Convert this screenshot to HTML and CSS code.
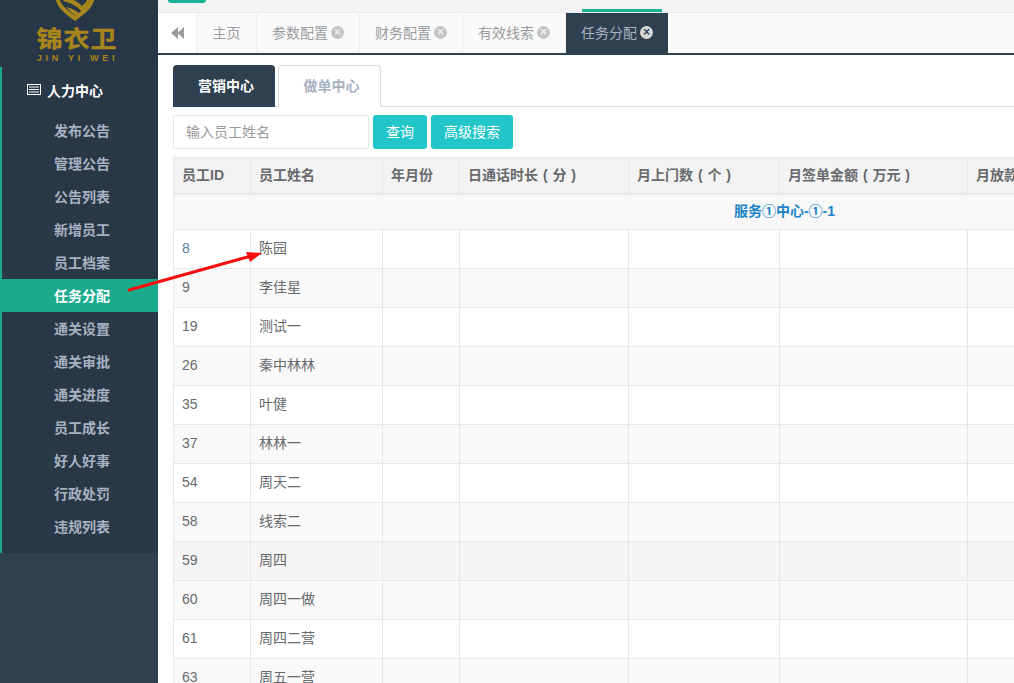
FILE: index.html
```html
<!DOCTYPE html>
<html lang="zh">
<head>
<meta charset="utf-8">
<title>任务分配</title>
<link rel="stylesheet" href="styles.css">
</head>
<body>
<div class="app">
  <aside class="sidebar">
    <div class="logo">
      <svg class="shield" width="44" height="21" viewBox="0 0 44 21"><path d="M2 -4 C3 8 13 14 22 21 C31 14 41 8 42 -4 L38 -4 C37 6 29 10 22 16 C15 10 7 6 6 -4 Z" fill="#a8861c"/><path d="M13 -3 C20 -1 25 2 29 6 L33 2 L35 -3 L38 -3 C37 3 33 8 28 11 C24 6 18 3 10 1 Z M13 7 C18 8 22 10 26 13 L22 16 C19 13 16 10 13 7 Z" fill="#a8861c"/></svg>
      <div class="logo-cn">锦衣卫</div>
      <div class="logo-en">JIN YI WEI</div>
    </div>
    <nav class="menu">
      <div class="menu-head">
        <svg class="menu-icon" width="14" height="11" viewBox="0 0 14 11"><rect x=".5" y=".5" width="13" height="10" fill="#293846" stroke="#fff"/><path d="M2 3h10M2 5.500h10M2 8h10" stroke="#fff"/></svg>
        <span>人力中心</span>
      </div>
      <a class="item">发布公告</a>
      <a class="item">管理公告</a>
      <a class="item">公告列表</a>
      <a class="item">新增员工</a>
      <a class="item">员工档案</a>
      <a class="item active">任务分配</a>
      <a class="item">通关设置</a>
      <a class="item">通关审批</a>
      <a class="item">通关进度</a>
      <a class="item">员工成长</a>
      <a class="item">好人好事</a>
      <a class="item">行政处罚</a>
      <a class="item">违规列表</a>
    </nav>
  </aside>
  <main class="main">
    <div class="topbar">
      <span class="top-btn"></span>
      <span class="top-line"></span>
    </div>
    <div class="tabbar">
      <div class="tab back"><svg width="14" height="12" viewBox="0 0 14 12"><path d="M7 0V12L0 6ZM13 0V12L6.500 6Z" fill="#999c9e"/></svg></div>
      <div class="tab home">主页</div>
      <div class="tab">参数配置<span class="close">×</span></div>
      <div class="tab">财务配置<span class="close">×</span></div>
      <div class="tab">有效线索<span class="close">×</span></div>
      <div class="tab current">任务分配<span class="close">×</span></div>
    </div>
    <div class="content">
      <div class="subtabs">
        <div class="subtab on">营销中心</div>
        <div class="subtab">做单中心</div>
      </div>
      <div class="search">
        <input class="field" placeholder="输入员工姓名">
        <button class="btn">查询</button>
        <button class="btn">高级搜索</button>
      </div>
      <table class="grid">
        <colgroup>
          <col class="c1"><col class="c2"><col class="c3"><col class="c4"><col class="c5"><col class="c6"><col class="c7"><col class="c8">
        </colgroup>
        <thead>
          <tr><th>员工ID</th><th>员工姓名</th><th>年月份</th><th>日通话时长 ( 分 )</th><th>月上门数 ( 个 )</th><th>月签单金额 ( 万元 )</th><th>月放款金额 ( 万元 )</th><th>备注</th></tr>
        </thead>
        <tbody>
          <tr class="group"><td colspan="8">服务①中心-①-1</td></tr>
          <tr><td class="link">8</td><td>陈园</td><td></td><td></td><td></td><td></td><td></td><td></td></tr>
          <tr class="alt"><td>9</td><td>李佳星</td><td></td><td></td><td></td><td></td><td></td><td></td></tr>
          <tr><td>19</td><td>测试一</td><td></td><td></td><td></td><td></td><td></td><td></td></tr>
          <tr class="alt"><td>26</td><td>秦中林林</td><td></td><td></td><td></td><td></td><td></td><td></td></tr>
          <tr><td>35</td><td>叶健</td><td></td><td></td><td></td><td></td><td></td><td></td></tr>
          <tr class="alt"><td>37</td><td>林林一</td><td></td><td></td><td></td><td></td><td></td><td></td></tr>
          <tr><td>54</td><td>周天二</td><td></td><td></td><td></td><td></td><td></td><td></td></tr>
          <tr class="alt"><td>58</td><td>线索二</td><td></td><td></td><td></td><td></td><td></td><td></td></tr>
          <tr class="hover"><td>59</td><td>周四</td><td></td><td></td><td></td><td></td><td></td><td></td></tr>
          <tr class="alt"><td>60</td><td>周四一做</td><td></td><td></td><td></td><td></td><td></td><td></td></tr>
          <tr><td>61</td><td>周四二营</td><td></td><td></td><td></td><td></td><td></td><td></td></tr>
          <tr class="alt"><td>63</td><td>周五一营</td><td></td><td></td><td></td><td></td><td></td><td></td></tr>
        </tbody>
      </table>
    </div>
  </main>
  <svg class="arrow" width="140" height="46" viewBox="0 0 140 46"><path d="M2 44 L124 10" stroke="#f70d0d" stroke-width="3" stroke-linecap="round"/><path d="M135 7 L119 6 L123 16 Z" fill="#f70d0d"/></svg>
</div>
</body>
</html>
```
FILE: styles.css
```css
* { box-sizing: border-box; }
html, body { margin: 0; height: 100%; overflow: hidden; }
body {
  font-family: "Liberation Sans", "Noto Sans CJK SC", sans-serif;
  font-size: 14px;
  color: #676a6c;
  background: #fff;
}
.app { position: relative; display: flex; width: 1014px; height: 683px; overflow: hidden; }

.sidebar { flex: 0 0 158px; background: #2f4050; display: flex; flex-direction: column; }
.logo {
  height: 67px;
  background: #283748;
  display: flex;
  flex-direction: column;
  align-items: center;
  color: #a8861c;
}
.shield { display: block; flex: none; margin-right: 8px; }
.logo-cn { font-size: 26px; line-height: 30px; height: 30px; font-weight: 700; letter-spacing: 1px; margin-top: 3px; margin-left: -4px; transform: scaleY(.88); -webkit-text-stroke: .4px #a8861c; }
.logo-en { font-size: 9px; line-height: 10px; font-weight: 700; letter-spacing: 3.7px; margin-left: -3px; margin-top: -1px; }

.menu { background: #293846; border-left: 2px solid #19aa8d; height: 486px; display: flex; flex-direction: column; }
.menu-head {
  height: 47px;
  padding-bottom: 2px;
  display: flex;
  align-items: center;
  gap: 6px;
  padding-left: 25px;
  color: #fff;
  font-weight: 700;
  flex: none;
}
.menu-icon { flex: none; }
.item {
  flex: none;
  height: 33px;
  line-height: 35px;
  padding-left: 52px;
  color: #a7b1c2;
  font-weight: 700;
}
.item.active { background: #1aab8d; color: #fff; margin-left: -2px; padding-left: 54px; }

.main { flex: 1; min-width: 0; display: flex; flex-direction: column; overflow: hidden; }
.topbar { position: relative; height: 13px; background: #f3f3f4; border-bottom: 1px solid #e7eaec; flex: none; }
.top-btn { position: absolute; left: 10px; top: 0; width: 38px; height: 3px; background: #1ab394; border-radius: 0 0 3px 3px; }
.top-line { position: absolute; left: 424px; top: 9px; width: 80px; height: 3px; background: #1ab394; }

.tabbar { height: 42px; display: flex; flex: none; background: #fafafa; border-bottom: 2px solid #2f4050; }
.tab {
  height: 40px;
  width: 103px;
  flex: none;
  display: flex;
  align-items: center;
  justify-content: center;
  gap: 3px;
  padding-bottom: 2px;
  color: #999c9e;
  border-right: 1px solid #eee;
}
.tab.back { width: 39px; background: #fff; padding-bottom: 0; padding-left: 1px; }
.tab.home { width: 60px; }
.tab.current { background: #2f4050; color: #a7b1c2; width: 102px; border-right: 0; }
.close {
  width: 13px;
  height: 13px;
  border-radius: 50%;
  background: #c4c4c4;
  color: #eee;
  font-size: 12px;
  line-height: 13px;
  text-align: center;
  font-weight: 700;
}
.current .close { background: #d9d9d9; color: #2f4050; }

.content { padding: 10px 0 0 15px; flex: 1; min-height: 0; }
.subtabs { display: flex; gap: 3px; height: 42px; border-bottom: 1px solid #ddd; width: 841px; flex: none; }
.subtab {
  width: 103px;
  height: 42px;
  line-height: 41px;
  text-align: center;
  padding-left: 4px;
  font-weight: 700;
  color: #a7b1c2;
  border: 1px solid #ddd;
  border-bottom: 0;
  border-radius: 4px 4px 0 0;
  background: #fff;
}
.subtab.on { width: 102px; background: #2f4050; color: #fff; border-color: #2f4050; }

.search { display: flex; gap: 4px; margin-top: 8px; height: 34px; }
.field {
  width: 196px;
  height: 34px;
  border: 1px solid #e5e6e7;
  border-radius: 2px;
  padding: 0 12px 1px;
  font: inherit;
  color: #676a6c;
  outline: 0;
}
.field::placeholder { color: #999; opacity: 1; }
.btn {
  height: 34px;
  padding: 0 13px 2px;
  border: 0;
  border-radius: 3px;
  background: #23c6c8;
  color: #fff;
  font: inherit;
}

.grid { border-collapse: collapse; table-layout: fixed; width: 1222px; margin-top: 8px; line-height: 20px; }
.c1 { width: 77px; }
.c2 { width: 132px; }
.c3 { width: 77px; }
.c4 { width: 169px; }
.c5 { width: 151px; }
.c6 { width: 188px; }
.c7 { width: 188px; }
.c8 { width: 240px; }
.grid th, .grid td { border: 1px solid #e7e7e7; padding: 0 8px; text-align: left; }
.grid th { height: 36px; background: #f3f3f3; font-weight: 700; border-bottom-width: 2px; white-space: nowrap; word-spacing: 1px; }
.grid td { height: 39px; padding-bottom: 2px; }
.grid .group td { height: 36px; background: #f8f8f8; text-align: center; font-weight: 700; color: #1c84c6; padding-bottom: 2px; }
.grid .alt td { background: #f9f9f9; }
.grid .hover td { background: #f5f5f5; }
.grid .link { color: #5a7fa8; }

.arrow { position: absolute; left: 127px; top: 246px; pointer-events: none; }
```
